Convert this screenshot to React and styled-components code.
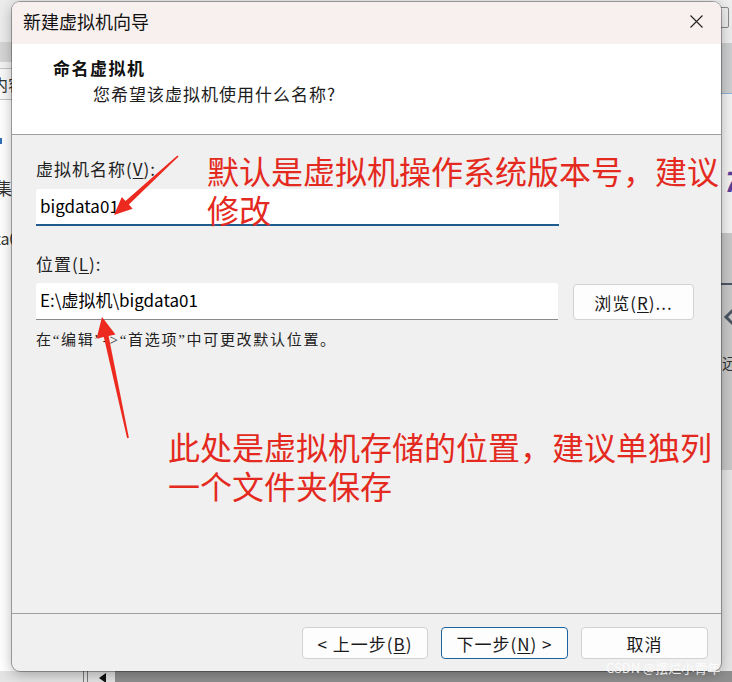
import React from "react";
import styled, { createGlobalStyle } from "styled-components";

const cjk = `"Noto Sans CJK SC", "Noto Sans", sans-serif`;

const GlobalStyle = createGlobalStyle`
  html, body {
    margin: 0;
    padding: 0;
    background: #8e8e8e;
  }
  body {
    font-family: ${cjk};
  }
  * {
    box-sizing: border-box;
  }
`;

const Desktop = styled.div`
  position: relative;
  width: 732px;
  height: 682px;
  overflow: hidden;
  display: flex;
  flex-direction: column;
  background: #8e8e8e;
`;

/* ---- window behind the dialog (only its edges show) ---- */

const BackWindow = styled.div`
  display: flex;
  height: 671px;
  flex: none;
`;

const BackPane = styled.div`
  width: ${(p) => (p.$width ? `${p.$width}px` : "auto")};
  flex: ${(p) => (p.$width ? "none" : 1)};
  display: flex;
  flex-direction: column;
  background: ${(p) => p.$bg};
  overflow: hidden;
`;

const Band = styled.div`
  flex: ${(p) => (p.$h ? "none" : 1)};
  height: ${(p) => (p.$h ? `${p.$h}px` : "auto")};
  background: ${(p) => p.$bg};
  border-bottom: ${(p) => (p.$line ? `1px solid ${p.$line}` : "none")};
  padding-left: ${(p) => p.$pad || 0}px;
  padding-top: ${(p) => p.$top || 0}px;
  display: flex;
  flex-direction: column;
`;

const TabStrip = styled.div`
  height: 32px;
  flex: none;
  display: flex;
  align-items: center;
  background: #f9f9f9;
  border-top: 1px solid #c4c4c4;
  border-bottom: 1px solid #c4c4c4;
`;

const BackText = styled.span`
  display: block;
  margin-left: ${(p) => p.$shift || 0}px;
  margin-top: ${(p) => p.$top || 0}px;
  font-size: ${(p) => p.$size || 16}px;
  line-height: 20px;
  color: ${(p) => p.$color || "#333"};
  white-space: nowrap;
  font-weight: ${(p) => p.$weight || 400};
  font-style: ${(p) => (p.$italic ? "italic" : "normal")};
`;

const Tick = styled.div`
  width: 2px;
  height: 6px;
  margin-top: 38px;
  background: #2f6db5;
`;

const ControlBox = styled.div`
  width: 10px;
  height: 21px;
  margin-top: 7px;
  border: 1px solid #8a8a8a;
  border-radius: 2px;
`;

const DarkRule = styled.div`
  height: 2px;
  margin-top: 50px;
  margin-left: -${(p) => p.$pad || 0}px;
  background: #4d5866;
`;

const BottomBar = styled.div`
  flex: 1;
  display: flex;
`;

const BottomLeft = styled.div`
  width: 115px;
  background: #e4e4e4;
  display: flex;
  align-items: stretch;
  padding-left: 83px;
  gap: 3px;
`;

const VLine = styled.div`
  width: 1px;
  background: #7a7a7a;
`;

const Pointer = styled.div`
  margin-left: 8px;
  margin-top: 2px;
  width: 0;
  height: 0;
  border-top: 5px solid transparent;
  border-bottom: 5px solid transparent;
  border-right: 7px solid #111;
`;

const BottomRest = styled.div`
  flex: 1;
  background: #8f8f8f;
`;

/* ---- wizard dialog ---- */

const Dialog = styled.div`
  position: absolute;
  left: 12px;
  top: 2px;
  width: 709px;
  height: 669px;
  display: flex;
  flex-direction: column;
  background: #f0f0f0;
  border-radius: 8px;
  overflow: hidden;
  box-shadow: 0 0 0 1px rgba(0, 0, 0, 0.3), 0 3px 14px rgba(0, 0, 0, 0.3);
`;

const TitleBar = styled.div`
  height: 42px;
  flex: none;
  display: flex;
  align-items: center;
  justify-content: space-between;
  padding: 0 18px 4px 11px;
  background: #f8f0ee;
`;

const Title = styled.span`
  font-size: 18px;
  color: #111;
`;

const Header = styled.div`
  height: 91px;
  flex: none;
  background: #fff;
  border-bottom: 1px solid #a0a0a0;
  padding: 13px 0 0 41px;
`;

const Heading = styled.div`
  font-size: 17px;
  line-height: 22px;
  font-weight: 700;
  letter-spacing: 1.5px;
  color: #111;
`;

const SubHeading = styled.div`
  margin: 4px 0 0 40px;
  font-size: 17px;
  line-height: 22px;
  letter-spacing: 1px;
  color: #1c1c1c;
`;

const Body = styled.div`
  flex: 1;
  display: flex;
  flex-direction: column;
  padding: 24px 26px 0 24px;
`;

const Label = styled.div`
  margin-top: ${(p) => p.$gap || 0}px;
  font-size: 17px;
  line-height: 20px;
  letter-spacing: 1px;
  color: #222;
`;

const Key = styled.u`
  text-underline-offset: 2px;
`;

const Field = styled.input`
  width: ${(p) => p.$width}px;
  height: 37px;
  margin: 0;
  padding: 0 0 3px 4px;
  border: none;
  border-bottom: ${(p) => (p.$focused ? "2px solid #1f5b8c" : "1px solid #8a8a8a")};
  border-radius: 3px 3px 0 0;
  background: #fff;
  font-family: ${cjk};
  font-size: 17px;
  color: #000;
  outline: none;
`;

const NameField = styled(Field)`
  margin-top: 10px;
`;

const LocationRow = styled.div`
  margin-top: 9px;
  display: flex;
  align-items: flex-start;
  gap: 15px;
`;

const Button = styled.button`
  width: ${(p) => p.$width || 127}px;
  height: ${(p) => p.$height || 32}px;
  margin-top: ${(p) => p.$top || 0}px;
  padding: 0;
  background: #fdfdfd;
  border: 1px solid ${(p) => (p.$primary ? "#1c62a0" : "#d2d2d2")};
  border-radius: 4px;
  font-family: ${cjk};
  font-size: 17px;
  letter-spacing: 1px;
  color: #1a1a1a;
`;

const Hint = styled.div`
  margin-top: 10px;
  font-family: "Liberation Serif", "Noto Sans CJK SC", serif;
  font-size: 15px;
  line-height: 20px;
  letter-spacing: 1.7px;
  color: #222;
`;

const Footer = styled.div`
  flex: none;
  display: flex;
  justify-content: flex-end;
  gap: 13px;
  padding: 13px 13px 12px;
  border-top: 1px solid #a0a0a0;
`;

/* ---- red annotations on top ---- */

const Overlay = styled.div`
  position: absolute;
  inset: 0;
  pointer-events: none;
`;

const ArrowLayer = styled.svg`
  position: absolute;
  left: 0;
  top: 0;
`;

const Note = styled.div`
  position: absolute;
  left: ${(p) => p.$x}px;
  top: ${(p) => p.$y}px;
  font-size: 32px;
  line-height: 39px;
  color: #e42a20;
  white-space: nowrap;
`;

const Watermark = styled.div`
  position: absolute;
  left: 606px;
  top: 661px;
  font-size: 13px;
  line-height: 14px;
  color: rgba(255, 255, 255, 0.85);
  white-space: nowrap;
`;

const CloseIcon = () => (
  <svg width="13" height="13" viewBox="0 0 13 13">
    <path d="M0.5 0.5 L12.5 12.5 M12.5 0.5 L0.5 12.5" stroke="#222" strokeWidth="1.1" fill="none" />
  </svg>
);

const Chevron = () => (
  <svg width="12" height="20" viewBox="0 0 12 20" style={{ marginTop: 22, marginLeft: 1 }}>
    <path d="M11 2 L3 10 L11 18" stroke="#4b5563" strokeWidth="3" fill="none" />
  </svg>
);

export default function App() {
  return (
    <>
      <GlobalStyle />
      <Desktop>
        <BackWindow>
          <BackPane $width={366} $bg="#fff">
            <Band $h={42} $bg="#ececec" />
            <Band $h={20} $bg="#d6d6d6" />
            <Band $h={6} $bg="#f4f4f4" />
            <TabStrip>
              <BackText $shift={-8}>内容</BackText>
            </TabStrip>
            <Band $bg="#fff">
              <Tick />
              <BackText $shift={-5} $top={34} $size={17}>集合</BackText>
              <BackText $shift={-47} $top={30} $size={16}>bigdata01</BackText>
            </Band>
          </BackPane>
          <BackPane $bg="#ececec">
            <Band $h={43} $bg="#eeeeee" $pad={353}>
              <ControlBox />
            </Band>
            <Band $h={51} $bg="#cecfd1" $line="#8db4d9" />
            <Band $h={139} $bg="#f3f3f3" $pad={356} $top={76}>
              <BackText $size={28} $color="#5b3f9a" $weight={700} $italic>7</BackText>
            </Band>
            <Band $h={237} $bg="#c8c8c8" $pad={356}>
              <DarkRule $pad={356} />
              <Chevron />
              <BackText $top={26} $size={15} $color="#333">远程</BackText>
            </Band>
            <Band $bg="#e6e6e6" />
          </BackPane>
        </BackWindow>
        <BottomBar>
          <BottomLeft>
            <VLine />
            <VLine />
            <Pointer />
          </BottomLeft>
          <BottomRest />
        </BottomBar>

        <Dialog>
          <TitleBar>
            <Title>新建虚拟机向导</Title>
            <CloseIcon />
          </TitleBar>
          <Header>
            <Heading>命名虚拟机</Heading>
            <SubHeading>您希望该虚拟机使用什么名称?</SubHeading>
          </Header>
          <Body>
            <Label>
              虚拟机名称(<Key>V</Key>):
            </Label>
            <NameField $width={523} $focused readOnly value="bigdata01" />
            <Label $gap={28}>
              位置(<Key>L</Key>):
            </Label>
            <LocationRow>
              <Field $width={522} readOnly value="E:\虚拟机\bigdata01" />
              <Button $width={121} $height={36} $top={1}>
                浏览(<Key>R</Key>)...
              </Button>
            </LocationRow>
            <Hint>在“编辑”-&gt;“首选项”中可更改默认位置。</Hint>
          </Body>
          <Footer>
            <Button $width={126}>
              &lt; 上一步(<Key>B</Key>)
            </Button>
            <Button $primary>
              下一步(<Key>N</Key>) &gt;
            </Button>
            <Button>取消</Button>
          </Footer>
        </Dialog>

        <Overlay>
          <ArrowLayer width="732" height="682" viewBox="0 0 732 682">
            <polygon
              fill="#ec2a1f"
              points="178.6,156.6 128.9,204.6 132.6,208.7 114,215 121.8,196.9 125.5,201 177.4,155.4"
            />
            <polygon
              fill="#ec2a1f"
              points="128.9,437.8 108.6,336 115.5,334.6 102,317 96.6,338.6 103.8,337 127.1,438.2"
            />
          </ArrowLayer>
          <Note $x={207} $y={151}>
            默认是虚拟机操作系统版本号，建议
            <br />
            修改
          </Note>
          <Note $x={168} $y={427}>
            此处是虚拟机存储的位置，建议单独列
            <br />
            一个文件夹保存
          </Note>
          <Watermark>CSDN @摆烂小青年</Watermark>
        </Overlay>
      </Desktop>
    </>
  );
}
